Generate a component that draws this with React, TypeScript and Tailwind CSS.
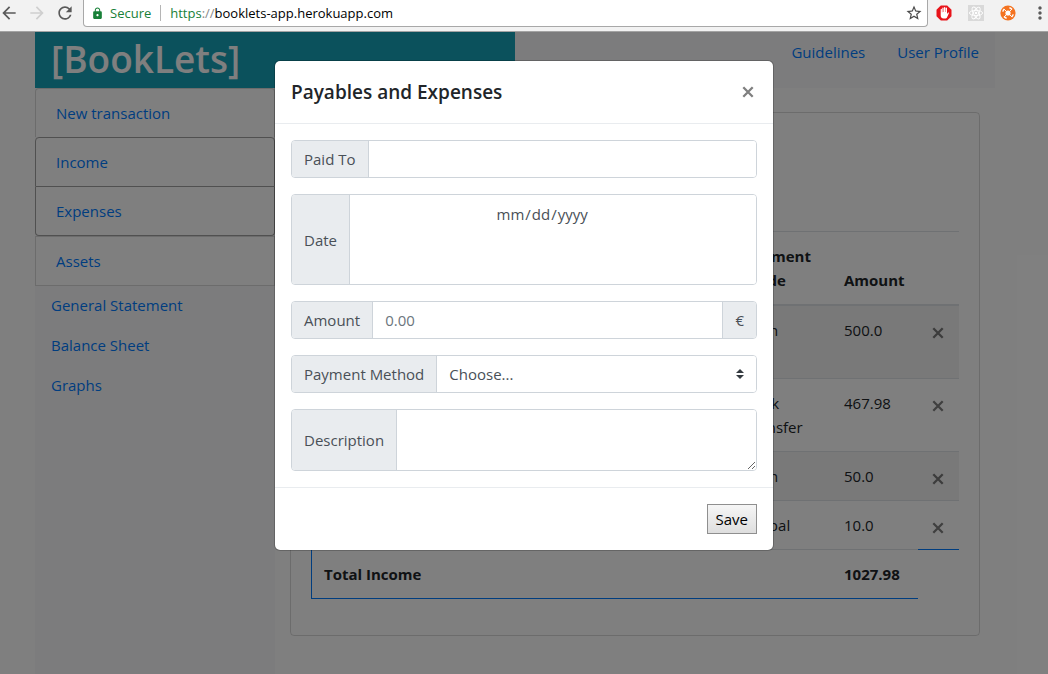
import type { ReactNode } from "react";
import {
  MdArrowBack,
  MdArrowForward,
  MdLock,
  MdMoreVert,
  MdRefresh,
  MdStarBorder,
} from "react-icons/md";

function Cross({ className }: { className: string }) {
  return (
    <svg viewBox="0 0 12 12" className={className} aria-hidden="true">
      <path d="M1.3 1.3 10.7 10.7M10.7 1.3 1.3 10.7" stroke="currentColor" strokeWidth="2.3" fill="none" />
    </svg>
  );
}

function StopHandIcon() {
  return (
    <svg viewBox="0 0 16 16" className="size-4" aria-hidden="true">
      <path d="M4.8.5h6.4l4.3 4.3v6.4l-4.3 4.3H4.8L.5 11.2V4.8z" fill="#e8141b" />
      <path
        d="M4.7 8.2V4.4c0-.9 1.2-.9 1.2 0v2.9h.4V3.1c0-.9 1.3-.9 1.3 0v4h.4V2.6c0-.9 1.3-.9 1.3 0v4.5h.4v-4c0-.9 1.3-.9 1.3 0v6l.9-1.4c.6-.6 1.3-.2 1 .5l-1.9 4.2c-.4.8-1 1.1-1.8 1.1H7.5c-1.6 0-2.8-1.1-2.8-2.7z"
        fill="#fff"
      />
    </svg>
  );
}

function AtomIcon() {
  return (
    <svg viewBox="0 0 16 16" className="size-4" aria-hidden="true">
      <path d="M0 0h16v16H0z" fill="#d9d9d9" />
      <g fill="none" stroke="#fff" strokeWidth="0.9">
        <ellipse cx="8" cy="8" rx="6.6" ry="2.6" />
        <ellipse cx="8" cy="8" rx="6.6" ry="2.6" transform="rotate(60 8 8)" />
        <ellipse cx="8" cy="8" rx="6.6" ry="2.6" transform="rotate(120 8 8)" />
      </g>
      <circle cx="8" cy="8" r="1.3" fill="#fff" />
    </svg>
  );
}

function OrangeIcon() {
  return (
    <svg viewBox="0 0 16 16" className="size-4" aria-hidden="true">
      <circle cx="8" cy="8" r="7.6" fill="#f47321" />
      <circle cx="8" cy="8" r="2.6" fill="#fff" />
      <path
        d="M2.8 6.6A5.4 5.4 0 0 1 4.4 4M9.4 2.8A5.4 5.4 0 0 1 12 4.4M13.2 9.4A5.4 5.4 0 0 1 11.6 12M6.6 13.2A5.4 5.4 0 0 1 4 11.6"
        fill="none"
        stroke="#fff"
        strokeWidth="1.5"
      />
      <path d="m4.2 4.2 2 2M11.8 4.2l-2 2M11.8 11.8l-2-2M4.2 11.8l2-2" stroke="#fff" strokeWidth="1" />
    </svg>
  );
}

function BrowserBar() {
  return (
    <header className="flex h-8 shrink-0 items-start border-b border-[#a3a3a3] bg-[#f2f2f2]">
      <div className="-ml-px flex h-[26px] items-center gap-2 pr-2 text-[#5a5a5a]">
        <button type="button" aria-label="Back"><MdArrowBack className="size-5" /></button>
        <button type="button" aria-label="Forward" disabled className="text-[#cfcfcf]"><MdArrowForward className="size-5" /></button>
        <button type="button" aria-label="Reload"><MdRefresh className="size-5" /></button>
      </div>
      <div className="flex h-[27px] flex-1 items-center rounded-b-sm border border-t-0 border-[#a8a8a8] bg-white pr-1 pl-[7px] text-[13px]">
        <MdLock className="size-[13px] text-[#188038]" />
        <span className="pl-[6px] text-[#188038]">Secure</span>
        <span className="mr-[9px] ml-[9px] h-4 w-px bg-[#b5b5b5]" />
        <span className="flex-1 text-black">
          <span className="text-[#188038]">https</span>
          <span className="text-[#8a8a8a]">://</span>booklets-app.herokuapp.com
        </span>
        <button type="button" aria-label="Bookmark"><MdStarBorder className="size-[18px] text-[#4a4a4a]" /></button>
      </div>
      <div className="flex h-[26px] items-center gap-4 pl-2">
        <StopHandIcon />
        <AtomIcon />
        <OrangeIcon />
        <button type="button" aria-label="Menu" className="flex w-4 justify-center">
          <MdMoreVert className="size-5 shrink-0 text-[#5a5a5a]" />
        </button>
      </div>
    </header>
  );
}

function Sidebar() {
  return (
    <nav className="w-60 shrink-0 bg-[#f8f9fa] text-[#007bff]">
      <div className="flex flex-col">
        <a href="#new" className="rounded-t-sm border border-b-0 border-black/15 bg-white px-5 py-3">New transaction</a>
        <a href="#income" className="rounded-t-sm border border-[#a0a0a0] bg-white px-5 py-3">Income</a>
        <a href="#expenses" className="rounded-b-sm border border-t-0 border-[#a0a0a0] bg-white px-5 py-3">Expenses</a>
        <a href="#assets" className="border border-black/15 bg-white px-5 py-3">Assets</a>
      </div>
      <div className="-mt-px flex flex-col">
        <a href="#statement" className="px-4 py-2">General Statement</a>
        <a href="#balance" className="px-4 py-2">Balance Sheet</a>
        <a href="#graphs" className="px-4 py-2">Graphs</a>
      </div>
    </nav>
  );
}

const rows = [
  { mode: "Cash", amount: "500.0", size: "h-[73px]" },
  { mode: "Bank Transfer", amount: "467.98", size: "h-[73px]" },
  { mode: "Cash", amount: "50.0", size: "h-[49px]" },
  { mode: "Paypal", amount: "10.0", size: "h-[49px]" },
];

function IncomeTable() {
  return (
    <table className="w-full table-fixed border-collapse text-left">
      <colgroup>
        <col />
        <col className="w-[100px]" />
        <col className="w-[86px]" />
        <col className="w-[41px]" />
      </colgroup>
      <thead>
        <tr className="border-t border-b-2 border-t-[#dee2e6] border-b-[#dee2e6] align-bottom">
          <td />
          <th className="p-3">Payment Mode</th>
          <th className="p-3">Amount</th>
          <td />
        </tr>
      </thead>
      <tbody>
        {rows.map((row, i) => (
          <tr key={i} className={`${row.size} border-t border-[#dee2e6] align-top odd:bg-black/5`}>
            <td />
            <td className="px-3 pt-3">{row.mode}</td>
            <td className="px-3 pt-3">{row.amount}</td>
            <td className="pt-[21px] pl-[14px]">
              <button type="button" aria-label="Delete" className="block text-black/50">
                <Cross className="size-3" />
              </button>
            </td>
          </tr>
        ))}
        <tr className="border-t border-[#dee2e6]">
          <th colSpan={2} className="border-b border-l border-b-[#007bff] border-l-[#007bff] p-3">Total Income</th>
          <th className="border-b border-b-[#007bff] p-3">1027.98</th>
          <td className="border-t border-t-[#007bff]" />
        </tr>
      </tbody>
    </table>
  );
}

function Page() {
  return (
    <div className="flex flex-1 flex-col bg-white pr-[18px]">
      <div className="mx-auto flex w-full max-w-[960px] flex-1 flex-col">
        <div className="flex h-14 bg-[#f8f9fa]">
          <h1 className="flex w-1/2 items-center bg-[#17a2b8] px-4 pb-1 text-[37px] leading-none font-semibold text-white">[BookLets]</h1>
          <nav className="flex w-1/2 justify-end gap-8 px-4 pt-2 text-[#007bff]">
            <a href="#guidelines">Guidelines</a>
            <a href="#profile">User Profile</a>
          </nav>
        </div>
        <div className="flex flex-1">
          <Sidebar />
          <main className="flex-1 px-[15px] pt-6">
            <section className="rounded border border-black/15 px-5 pt-[118px] pb-9">
              <IncomeTable />
            </section>
          </main>
        </div>
      </div>
    </div>
  );
}

const control = "min-w-0 flex-1 bg-white px-3 text-[#495057] outline-none placeholder:text-[#6c757d]";

function Group({ id, label, size, children }: { id: string; label: string; size: string; children: ReactNode }) {
  return (
    <div className={`${size} flex overflow-hidden rounded border border-[#ced4da]`}>
      <label htmlFor={id} className="flex items-center border-r border-[#ced4da] bg-[#e9ecef] px-3 text-[#495057]">{label}</label>
      {children}
    </div>
  );
}

function PayablesDialog() {
  return (
    <div role="dialog" aria-labelledby="dialog-title" className="w-full max-w-[500px] rounded-md border border-black/20 bg-white bg-clip-padding">
      <div className="flex items-center justify-between border-b border-[#e9ecef] p-4">
        <h2 id="dialog-title" className="text-[19px] leading-[30px] font-semibold text-[#212529]">Payables and Expenses</h2>
        <button type="button" aria-label="Close" className="px-[3px] text-[#7f7f7f]"><Cross className="size-3" /></button>
      </div>
      <form className="flex flex-col">
        <div className="flex flex-col gap-4 p-4">
          <Group id="paid-to" label="Paid To" size="h-[38px]">
            <input id="paid-to" type="text" className={control} />
          </Group>
          <Group id="date" label="Date" size="h-[91px]">
            <div className="flex flex-1 items-start justify-center bg-white">
              <input
                id="date"
                type="date"
                className="h-[38px] text-[#495057] outline-none [&::-webkit-calendar-picker-indicator]:hidden"
              />
            </div>
          </Group>
          <Group id="amount" label="Amount" size="h-[38px]">
            <input id="amount" type="text" placeholder="0.00" className={control} />
            <span className="flex items-center border-l border-[#ced4da] bg-[#e9ecef] px-3 text-[#495057]">€</span>
          </Group>
          <Group id="method" label="Payment Method" size="h-[38px]">
            <div className="relative flex flex-1">
              <select id="method" className={`${control} appearance-none`}>
                <option>Choose...</option>
              </select>
              <svg viewBox="0 0 4 5" className="pointer-events-none absolute top-[13px] right-3 h-[10px] w-2" aria-hidden="true">
                <path fill="#343a40" d="M2 0 0 2h4zm0 5L0 3h4z" />
              </svg>
            </div>
          </Group>
          <Group id="description" label="Description" size="h-[62px]">
            <textarea id="description" className={`${control} py-2`} />
          </Group>
        </div>
        <div className="flex justify-end border-t border-[#e9ecef] p-4">
          <button type="submit" className="h-[30px] border border-[#8f8f8f] bg-linear-to-b from-[#f6f6f6] to-[#dedede] px-2 text-black">Save</button>
        </div>
      </form>
    </div>
  );
}

export default function App() {
  return (
    <div className="flex min-h-screen flex-col font-['Open_Sans','Noto_Sans',sans-serif] text-[15px] leading-6 text-[#212529]">
      <BrowserBar />
      <div className="relative flex flex-1 flex-col">
        <Page />
        <div className="absolute inset-0 flex items-start justify-center bg-black/50 pt-7">
          <PayablesDialog />
        </div>
      </div>
    </div>
  );
}
